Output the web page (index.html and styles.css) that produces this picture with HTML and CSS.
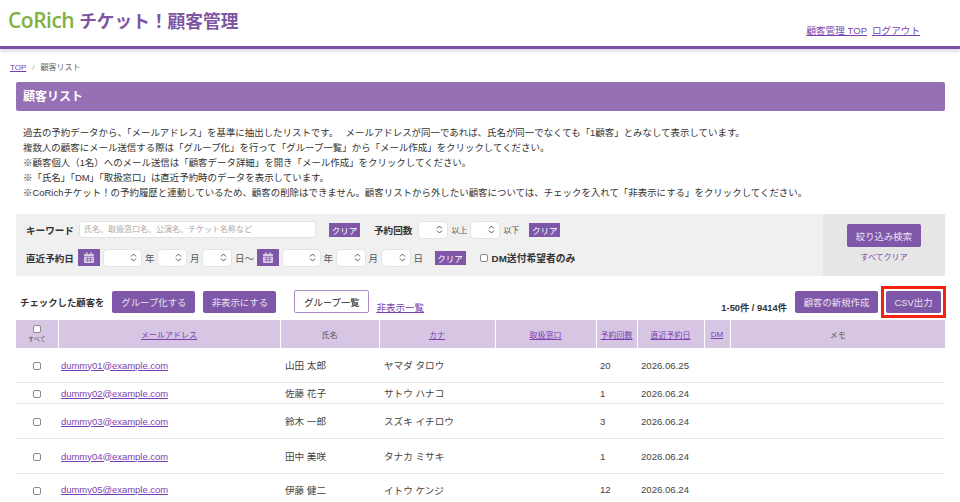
FILE: index.html
```html
<!DOCTYPE html>
<html lang="ja">
<head>
    <meta charset="UTF-8">
    <meta name="viewport" content="width=device-width, initial-scale=1.0">
    <title>顧客リスト</title>
    <link rel="stylesheet" href="styles.css">
</head>
<body>
    <header class="site-header">
        <div class="logo"><span class="logo-corich">CoRich</span><span class="logo-title">チケット！顧客管理</span></div>
        <nav class="header-nav">
            <a href="#">顧客管理 TOP</a>
            <a href="#">ログアウト</a>
        </nav>
    </header>

    <div class="breadcrumb"><a href="#">TOP</a><span class="crumb-sep">/</span><span>顧客リスト</span></div>

    <main class="content">
        <h1 class="page-title">顧客リスト</h1>

        <div class="intro">
            <p>過去の予約データから、「メールアドレス」を基準に抽出したリストです。&ensp;&nbsp;メールアドレスが同一であれば、氏名が同一でなくても「1顧客」とみなして表示しています。</p>
            <p>複数人の顧客にメール送信する際は「グループ化」を行って「グループ一覧」から「メール作成」をクリックしてください。</p>
            <p>※顧客個人（1名）へのメール送信は「顧客データ詳細」を開き「メール作成」をクリックしてください。</p>
            <p>※「氏名」「DM」「取扱窓口」は直近予約時のデータを表示しています。</p>
            <p>※CoRichチケット！の予約履歴と連動しているため、顧客の削除はできません。顧客リストから外したい顧客については、チェックを入れて「非表示にする」をクリックしてください。</p>
        </div>

        <form class="search-box">
            <div class="search-fields">
                <div class="search-row">
                    <span class="field-label">キーワード</span>
                    <input class="keyword-input" type="text" placeholder="氏名、取扱窓口名、公演名、チケット名称など">
                    <button class="clear-btn clear-keyword" type="button">クリア</button>
                    <span class="field-label count-label">予約回数</span>
                    <select class="sel sel-m"></select><span class="unit-small">以上</span>
                    <select class="sel sel-m"></select><span class="unit-small">以下</span>
                    <button class="clear-btn clear-count" type="button">クリア</button>
                </div>
                <div class="search-row">
                    <span class="field-label">直近予約日</span>
                    <button class="cal-btn" type="button">
                        <svg width="12" height="12" viewBox="0 0 12 12"><rect x="1" y="2" width="10" height="9" rx="1" fill="#d9cbe6"/><rect x="3" y="0.5" width="1.5" height="3" fill="#d9cbe6"/><rect x="7.5" y="0.5" width="1.5" height="3" fill="#d9cbe6"/><path d="M1 4.5h10M2.5 6.5h7M2.5 8.5h7M4.5 5v5M7.5 5v5" stroke="#7f57a8" stroke-width="0.6" fill="none"/></svg>
                    </button>
                    <select class="sel sel-l"></select><span class="unit">年</span>
                    <select class="sel sel-m"></select><span class="unit">月</span>
                    <select class="sel sel-m"></select><span class="unit">日～</span>
                    <button class="cal-btn" type="button">
                        <svg width="12" height="12" viewBox="0 0 12 12"><rect x="1" y="2" width="10" height="9" rx="1" fill="#d9cbe6"/><rect x="3" y="0.5" width="1.5" height="3" fill="#d9cbe6"/><rect x="7.5" y="0.5" width="1.5" height="3" fill="#d9cbe6"/><path d="M1 4.5h10M2.5 6.5h7M2.5 8.5h7M4.5 5v5M7.5 5v5" stroke="#7f57a8" stroke-width="0.6" fill="none"/></svg>
                    </button>
                    <select class="sel sel-l"></select><span class="unit">年</span>
                    <select class="sel sel-m"></select><span class="unit">月</span>
                    <select class="sel sel-m"></select><span class="unit">日</span>
                    <button class="clear-btn clear-date" type="button">クリア</button>
                    <label class="dm-check"><input class="check" type="checkbox">DM送付希望者のみ</label>
                </div>
            </div>
            <div class="search-actions">
                <button class="btn" type="button">絞り込み検索</button>
                <a class="clear-all" href="#">すべてクリア</a>
            </div>
        </form>

        <div class="toolbar">
            <span class="toolbar-label">チェックした顧客を</span>
            <button class="btn btn-group" type="button">グループ化する</button>
            <button class="btn btn-hide" type="button">非表示にする</button>
            <button class="btn-outline" type="button">グループ一覧</button>
            <a class="hidden-link" href="#">非表示一覧</a>
            <span class="result-count">1-50件 / 9414件</span>
            <button class="btn btn-new" type="button">顧客の新規作成</button>
            <span class="csv-frame"><button class="btn btn-csv" type="button">CSV出力</button></span>
        </div>

        <table class="customers">
            <colgroup>
                <col class="c-check"><col class="c-mail"><col class="c-name"><col class="c-kana"><col class="c-desk"><col class="c-count"><col class="c-date"><col class="c-dm"><col>
            </colgroup>
            <thead>
                <tr>
                    <th class="th-check"><input class="check" type="checkbox"><span>すべて</span></th>
                    <th><a href="#">メールアドレス</a></th>
                    <th>氏名</th>
                    <th><a href="#">カナ</a></th>
                    <th><a href="#">取扱窓口</a></th>
                    <th><a href="#">予約回数</a></th>
                    <th><a href="#">直近予約日</a></th>
                    <th><a href="#">DM</a></th>
                    <th>メモ</th>
                </tr>
            </thead>
            <tbody>
                <tr class="row-tall">
                    <td class="td-check"><input class="check" type="checkbox"></td>
                    <td class="td-mail"><a href="#">dummy01@example.com</a></td>
                    <td>山田 太郎</td><td>ヤマダ タロウ</td><td></td><td>20</td><td>2026.06.25</td><td></td><td></td>
                </tr>
                <tr class="row-short">
                    <td class="td-check"><input class="check" type="checkbox"></td>
                    <td class="td-mail"><a href="#">dummy02@example.com</a></td>
                    <td>佐藤 花子</td><td>サトウ ハナコ</td><td></td><td>1</td><td>2026.06.24</td><td></td><td></td>
                </tr>
                <tr class="row-tall">
                    <td class="td-check"><input class="check" type="checkbox"></td>
                    <td class="td-mail"><a href="#">dummy03@example.com</a></td>
                    <td>鈴木 一郎</td><td>スズキ イチロウ</td><td></td><td>3</td><td>2026.06.24</td><td></td><td></td>
                </tr>
                <tr class="row-tall">
                    <td class="td-check"><input class="check" type="checkbox"></td>
                    <td class="td-mail"><a href="#">dummy04@example.com</a></td>
                    <td>田中 美咲</td><td>タナカ ミサキ</td><td></td><td>1</td><td>2026.06.24</td><td></td><td></td>
                </tr>
                <tr class="row-last">
                    <td class="td-check"><input class="check" type="checkbox"></td>
                    <td class="td-mail"><a href="#">dummy05@example.com</a></td>
                    <td>伊藤 健二</td><td>イトウ ケンジ</td><td></td><td>12</td><td>2026.06.24</td><td></td><td></td>
                </tr>
            </tbody>
        </table>
    </main>
</body>
</html>
```

FILE: styles.css
```css
html, body {
    height: 502px;
    overflow: hidden;
}

body {
    margin: 0;
    background-color: #fff;
    color: #333;
    font-family: "Liberation Sans", "Noto Sans CJK JP", sans-serif;
    font-size: 10px;
}

a {
    color: #7a3fb0;
}

button, input, select {
    font-family: inherit;
    margin: 0;
}

.check {
    appearance: none;
    display: block;
    box-sizing: border-box;
    width: 8px;
    height: 8px;
    margin: 0;
    border: 1px solid #8a8a8a;
    border-radius: 2px;
    background: #fff;
}

/* ヘッダー */
.site-header {
    height: 46px;
    display: flex;
    justify-content: space-between;
    border-bottom: 3px solid #7d51a5;
    box-shadow: 0 3px 3px #e6dcef;
}

.logo {
    display: flex;
    align-items: center;
    padding: 0 0 6px 8px;
}

.logo-corich {
    font-family: "Open Sans", sans-serif;
    font-size: 21px;
    font-weight: 600;
    letter-spacing: -0.5px;
    color: #7fb13f;
    margin-right: 5px;
}

.logo-title {
    font-size: 17.7px;
    font-weight: bold;
    color: #7d55a2;
}

.header-nav {
    display: flex;
    gap: 5px;
    padding: 23px 40px 0 0;
    font-size: 9.6px;
}

/* パンくず */
.breadcrumb {
    height: 12px;
    line-height: 12px;
    margin-top: 13px;
    padding-left: 10px;
    font-size: 8px;
    color: #666;
}

.crumb-sep {
    margin: 0 6px;
    color: #aaa;
}

.content {
    margin: 0 15px 0 16px;
}

.page-title {
    margin: 8px 0 0;
    height: 29px;
    line-height: 30px;
    padding-left: 7px;
    background-color: #9570b4;
    border-radius: 2px;
    color: #fff;
    font-size: 12px;
    font-weight: bold;
}

.intro {
    margin-top: 14px;
    padding-left: 7px;
    color: #333;
}

.intro p {
    margin: 0;
    height: 15px;
    line-height: 15px;
    font-size: 9.45px;
    white-space: nowrap;
}

/* 検索 */
.search-box {
    margin-top: 14px;
    height: 62px;
    display: flex;
    background-color: #f0f0f0;
}

.search-fields {
    flex: 1;
    padding: 7px 0 0 10px;
    display: flex;
    flex-direction: column;
    gap: 11px;
}

.search-row {
    height: 17px;
    display: flex;
    align-items: center;
}

.field-label {
    width: 52px;
    font-size: 9.6px;
    font-weight: bold;
    white-space: nowrap;
}

.keyword-input {
    width: 237px;
    height: 17px;
    box-sizing: border-box;
    margin-left: 1px;
    padding: 0 4px;
    border: 1px solid #e2e2e2;
    border-radius: 3px;
    background: #fff;
    font-size: 8px;
}

.keyword-input::placeholder {
    color: #aaa;
}

.clear-btn {
    width: 31px;
    height: 14px;
    padding: 0;
    border: 0;
    background-color: #7f57a8;
    color: #fff;
    font-size: 8.5px;
}

.clear-keyword {
    margin-left: 13px;
}

.count-label {
    width: auto;
    margin: 0 6px 0 14px;
}

.clear-count {
    margin-left: 7px;
}

.clear-date {
    margin-left: 9px;
}

.sel {
    appearance: none;
    height: 18px;
    box-sizing: border-box;
    border: 1px solid #e4e4e4;
    border-radius: 4px;
    background: #fff url("data:image/svg+xml,%3Csvg xmlns='http://www.w3.org/2000/svg' width='7' height='9'%3E%3Cpath d='M1 3.5l2.5-2.5 2.5 2.5M1 5.5l2.5 2.5 2.5-2.5' fill='none' stroke='%23555' stroke-width='1'/%3E%3C/svg%3E") no-repeat right 4px center;
}

.sel-m {
    width: 30px;
}

.sel-l {
    width: 39px;
    margin-left: 3px;
}

.unit {
    margin: 0 2.5px 0 3px;
    font-size: 9.5px;
    color: #555;
    white-space: nowrap;
}

.unit-small {
    width: 16px;
    margin: 0 3px;
    font-size: 8px;
    color: #555;
}

.cal-btn {
    width: 22px;
    height: 17px;
    padding: 0;
    border: 0;
    background-color: #7f57a8;
    display: flex;
    align-items: center;
    justify-content: center;
}

.dm-check {
    display: flex;
    align-items: center;
    gap: 4px;
    margin-left: 14px;
    font-size: 9.8px;
    font-weight: bold;
    white-space: nowrap;
}

.search-actions {
    width: 122px;
    background-color: #e6e6e6;
    display: flex;
    flex-direction: column;
    align-items: center;
    padding-top: 10px;
    box-sizing: border-box;
}

.search-actions .btn {
    width: 74px;
    height: 23px;
}

.clear-all {
    margin-top: 5px;
    font-size: 8px;
    line-height: 12px;
    text-decoration: none;
}

/* ボタン */
.btn {
    height: 22px;
    padding: 0;
    border: 0;
    border-radius: 2px;
    background-color: #7f57a8;
    color: #e9e2f1;
    font-size: 9.4px;
}

.btn-group {
    width: 83px;
    margin-left: 8px;
}

.btn-hide {
    width: 73px;
    margin-left: 8px;
}

.btn-outline {
    width: 75px;
    height: 23px;
    margin: -1px 0 0 18px;
    padding: 0;
    border: 1px solid #a98bc5;
    border-radius: 2px;
    background: #fff;
    color: #222;
    font-size: 9.3px;
}

.btn-new {
    width: 83px;
    margin-left: 8px;
}

.btn-csv {
    display: block;
    width: 55px;
}

.csv-frame {
    margin: -5px -1px -5px 3px;
    padding: 2px;
    border: 3px solid #f5210f;
}

.toolbar {
    height: 22px;
    margin-top: 15px;
    padding-left: 4px;
    display: flex;
    align-items: center;
}

.toolbar-label {
    font-size: 9.4px;
    font-weight: bold;
    white-space: nowrap;
}

.hidden-link {
    margin: 10px 0 0 7px;
    font-size: 9.5px;
}

.result-count {
    margin: 10px 0 0 auto;
    font-size: 9.3px;
    font-weight: bold;
}

/* 一覧 */
.customers {
    width: 929px;
    margin-top: 7px;
    table-layout: fixed;
    border-collapse: collapse;
}

.c-check { width: 42px; }
.c-mail { width: 222px; }
.c-name { width: 99px; }
.c-kana { width: 116px; }
.c-desk { width: 101px; }
.c-count { width: 41px; }
.c-date { width: 67px; }
.c-dm { width: 26px; }

.customers th {
    height: 28px;
    padding: 0;
    background-color: #d6c6e4;
    border-right: 1px solid #fff;
    font-size: 8px;
    font-weight: normal;
    color: #555;
}

.customers th:last-child {
    border-right: 0;
}

.th-check .check {
    margin: 0 auto 2px;
}

.th-check span {
    display: block;
    font-size: 6px;
    line-height: 8px;
}

.customers td {
    padding: 0 0 0 4px;
    border-bottom: 1px solid #e4e4e4;
    font-size: 9.6px;
    color: #444;
    white-space: nowrap;
}

.customers td:nth-child(3),
.customers td:nth-child(4) {
    padding-left: 5px;
}

.row-tall td { height: 34px; }
.row-short td { height: 20px; }
.row-last td { height: 31px; }

.customers .td-check {
    padding: 0;
}

.td-check .check {
    margin: 2px auto 0;
}

.customers .td-mail {
    padding-left: 3px;
}

.td-mail a {
    font-size: 9.45px;
}
```
